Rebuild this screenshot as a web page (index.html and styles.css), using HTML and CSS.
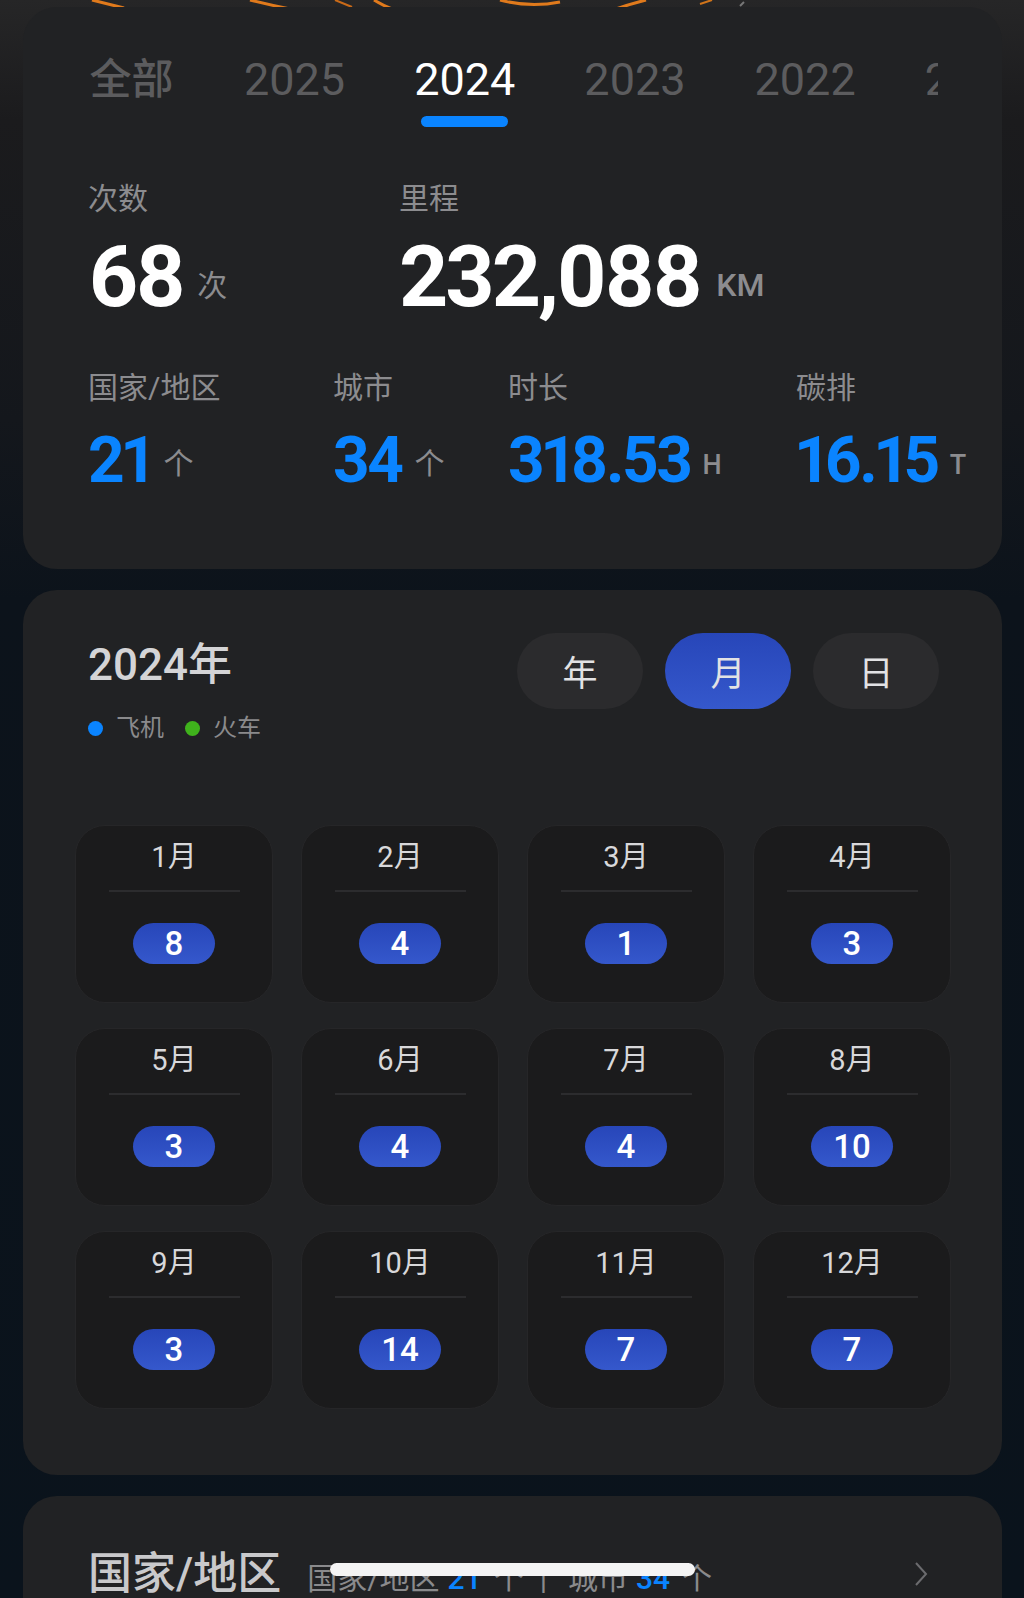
FILE: index.html
```html
<!DOCTYPE html>
<html lang="zh-CN">
<head>
    <meta charset="UTF-8">
    <meta name="viewport" content="width=device-width, initial-scale=1.0">
    <title>出行统计</title>
    <link rel="stylesheet" href="styles.css">
</head>
<body>
    <svg class="backdrop" width="1024" height="12" viewBox="0 0 1024 12">
        <path d="M92 0 L124 8" stroke="#e07a1c" stroke-width="3" fill="none"/>
        <path d="M250 0 Q270 5 290 9" stroke="#e07a1c" stroke-width="3" fill="none"/>
        <path d="M335 0 L352 7" stroke="#c96a18" stroke-width="2" fill="none"/>
        <path d="M374 0 Q384 6 392 9" stroke="#e07a1c" stroke-width="3" fill="none"/>
        <path d="M500 0 Q530 8 560 2" stroke="#e07a1c" stroke-width="3" fill="none"/>
        <path d="M616 9 Q630 4 646 0" stroke="#e07a1c" stroke-width="3" fill="none"/>
        <path d="M700 4 L712 0" stroke="#d0741a" stroke-width="2" fill="none"/>
        <path d="M740 6 L744 2" stroke="#777" stroke-width="2" fill="none"/>
    </svg>

    <div class="page">
        <section class="card summary">
            <nav class="tabs">
                <span class="tab cjk">全部</span>
                <span class="tab">2025</span>
                <span class="tab active">2024</span>
                <span class="tab">2023</span>
                <span class="tab">2022</span>
                <span class="tab">2021</span>
            </nav>

            <div class="stats main">
                <div class="stat">
                    <div class="label">次数</div>
                    <div class="value big">68<span class="unit">次</span></div>
                </div>
                <div class="stat">
                    <div class="label">里程</div>
                    <div class="value big">232,088<span class="unit latin">KM</span></div>
                </div>
            </div>

            <div class="stats minor">
                <div class="stat">
                    <div class="label">国家/地区</div>
                    <div class="value blue">21<span class="unit">个</span></div>
                </div>
                <div class="stat">
                    <div class="label">城市</div>
                    <div class="value blue">34<span class="unit">个</span></div>
                </div>
                <div class="stat">
                    <div class="label">时长</div>
                    <div class="value blue">318.53<span class="unit latin">H</span></div>
                </div>
                <div class="stat">
                    <div class="label">碳排</div>
                    <div class="value blue">16.15<span class="unit latin">T</span></div>
                </div>
            </div>
        </section>

        <section class="card calendar">
            <header class="cal-head">
                <div class="cal-title">
                    <h2>2024年</h2>
                    <div class="legend">
                        <span class="dot plane"></span>飞机
                        <span class="dot train"></span>火车
                    </div>
                </div>
                <div class="switch">
                    <button class="pill">年</button>
                    <button class="pill active">月</button>
                    <button class="pill">日</button>
                </div>
            </header>

            <div class="months">
                <div class="month"><div class="m-name">1月</div><div class="m-line"></div><span class="badge">8</span></div>
                <div class="month"><div class="m-name">2月</div><div class="m-line"></div><span class="badge">4</span></div>
                <div class="month"><div class="m-name">3月</div><div class="m-line"></div><span class="badge">1</span></div>
                <div class="month"><div class="m-name">4月</div><div class="m-line"></div><span class="badge">3</span></div>
                <div class="month"><div class="m-name">5月</div><div class="m-line"></div><span class="badge">3</span></div>
                <div class="month"><div class="m-name">6月</div><div class="m-line"></div><span class="badge">4</span></div>
                <div class="month"><div class="m-name">7月</div><div class="m-line"></div><span class="badge">4</span></div>
                <div class="month"><div class="m-name">8月</div><div class="m-line"></div><span class="badge">10</span></div>
                <div class="month"><div class="m-name">9月</div><div class="m-line"></div><span class="badge">3</span></div>
                <div class="month"><div class="m-name">10月</div><div class="m-line"></div><span class="badge">14</span></div>
                <div class="month"><div class="m-name">11月</div><div class="m-line"></div><span class="badge">7</span></div>
                <div class="month"><div class="m-name">12月</div><div class="m-line"></div><span class="badge">7</span></div>
            </div>
        </section>

        <section class="card regions">
            <div class="reg-row">
                <h2>国家/地区</h2>
                <span class="reg-sub">国家/地区<b>21</b>个<i>|</i>城市<b>34</b>个</span>
                <svg class="chevron" width="14" height="24" viewBox="0 0 14 24">
                    <path d="M2 1 L12 12 L2 23" stroke="#6b6b6e" stroke-width="2" fill="none"/>
                </svg>
            </div>
        </section>
    </div>

    <div class="home-bar"></div>
</body>
</html>
```

FILE: styles.css
```css
body {
    margin: 0;
    width: 1024px;
    height: 1598px;
    overflow: hidden;
    position: relative;
    font-family: Roboto, "Noto Sans CJK SC", sans-serif;
    background: linear-gradient(to bottom, #262627 0, #1b1b1d 120px, #14171c 420px, #0c131b 600px, #0a131c 100%);
    color: #fff;
}
.backdrop {
    position: absolute;
    top: 0;
    left: 0;
}
.page {
    position: relative;
    padding: 7px 22px 0 23px;
}
.card {
    background-color: #212224;
    border-radius: 34px;
    margin-bottom: 21px;
}

/* summary */
.summary {
    padding: 46px 64px 66px 65px;
}
.tabs {
    display: flex;
    gap: 69px;
    overflow: hidden;
    white-space: nowrap;
}
.tab {
    display: flex;
    flex-direction: column;
    align-items: center;
    flex-shrink: 0;
    font-size: 45px;
    line-height: 54px;
    color: #5c5c5e;
}
.tab.cjk {
    font-size: 42px;
    font-weight: 500;
}
.tab::after {
    content: "";
    width: 87px;
    height: 11px;
    margin-top: 9px;
    border-radius: 6px;
    background: transparent;
}
.tab.active {
    color: #fff;
}
.tab.active::after {
    background: #0a84ff;
}
.stats {
    display: grid;
}
.stats.main {
    grid-template-columns: 311px auto;
    margin-top: 52px;
}
.stats.minor {
    grid-template-columns: 245px 175px 288px auto;
    margin-top: 32px;
}
.label {
    font-size: 30px;
    line-height: 40px;
    color: #8c8c8f;
    white-space: nowrap;
}
.value {
    font-weight: 700;
    white-space: nowrap;
    font-variant-numeric: proportional-nums;
}
.value.big {
    font-size: 86px;
    line-height: 100px;
    margin-top: 8px;
    letter-spacing: -3px;
}
.value.blue {
    font-size: 64px;
    line-height: 76px;
    margin-top: 15px;
    color: #0a84ff;
    letter-spacing: -2.5px;
}
.unit {
    font-size: 30px;
    font-weight: 400;
    color: #8c8c8f;
    letter-spacing: 0;
    margin-left: 14px;
    vertical-align: 10px;
}
.unit.latin {
    font-weight: 500;
    font-size: 32px;
    margin-left: 16px;
}
.value.blue .unit {
    margin-left: 13px;
    vertical-align: 8px;
}
.value.blue .unit.latin {
    font-size: 27px;
    margin-left: 12px;
}

/* calendar */
.calendar {
    padding: 43px 51px 66px 52px;
}
.cal-head {
    display: flex;
    justify-content: space-between;
    align-items: flex-start;
    padding: 0 12px 0 13px;
}
.cal-title h2 {
    margin: 6px 0 0;
    font-size: 44px;
    line-height: 52px;
    font-weight: 500;
    color: #d4d4d6;
}
.legend {
    display: flex;
    align-items: center;
    margin-top: 21px;
    font-size: 24px;
    line-height: 32px;
    color: #8a8a8c;
}
.dot {
    width: 15px;
    height: 15px;
    border-radius: 50%;
    margin-right: 13px;
}
.dot.plane {
    background: #0a84ff;
}
.dot.train {
    background: #3fb21c;
    margin-left: 21px;
}
.switch {
    display: flex;
    gap: 22px;
}
.pill {
    width: 126px;
    height: 76px;
    border: none;
    border-radius: 38px;
    background: #2b2b2d;
    color: #e2e2e4;
    font-family: "Noto Sans CJK SC", sans-serif;
    font-size: 35px;
    line-height: 50px;
    padding: 0;
}
.pill.active {
    background: linear-gradient(to bottom, #2746b9, #3558cc);
}
.months {
    display: grid;
    grid-template-columns: repeat(4, 198px);
    column-gap: 28px;
    row-gap: 25px;
    margin-top: 81px;
}
.month {
    height: 178px;
    box-sizing: border-box;
    background-color: #1b1b1c;
    border: 1px solid #262628;
    border-radius: 30px;
    display: flex;
    flex-direction: column;
    align-items: center;
    padding-top: 12px;
}
.m-name {
    font-size: 29px;
    line-height: 38px;
    color: #d8d8da;
}
.m-line {
    width: 131px;
    height: 2px;
    margin-top: 14px;
    background: #2c2c2e;
}
.badge {
    margin-top: 31px;
    width: 82px;
    height: 41px;
    border-radius: 21px;
    background: linear-gradient(to bottom, #2746b9, #3558cc);
    font-size: 33px;
    line-height: 41px;
    font-weight: 500;
    text-align: center;
    color: #fff;
}

/* regions */
.regions {
    height: 200px;
    padding: 50px 74px 0 65px;
}
.reg-row {
    display: flex;
    align-items: baseline;
}
.reg-row h2 {
    margin: 0;
    font-size: 44px;
    line-height: 56px;
    font-weight: 500;
    color: #c9c9cb;
}
.reg-sub {
    margin-left: 26px;
    font-size: 30px;
    line-height: 40px;
    color: #8a8a8c;
    white-space: nowrap;
}
.reg-sub b {
    font-weight: 500;
    color: #0a84ff;
    margin: 0 12px 0 8px;
}
.reg-sub i {
    font-style: normal;
    margin: 0 21px 0 16px;
}
.chevron {
    margin-left: auto;
    align-self: center;
}
.home-bar {
    position: absolute;
    left: 330px;
    top: 1563px;
    width: 365px;
    height: 13px;
    border-radius: 7px;
    background: #f4f4f4;
}
```
